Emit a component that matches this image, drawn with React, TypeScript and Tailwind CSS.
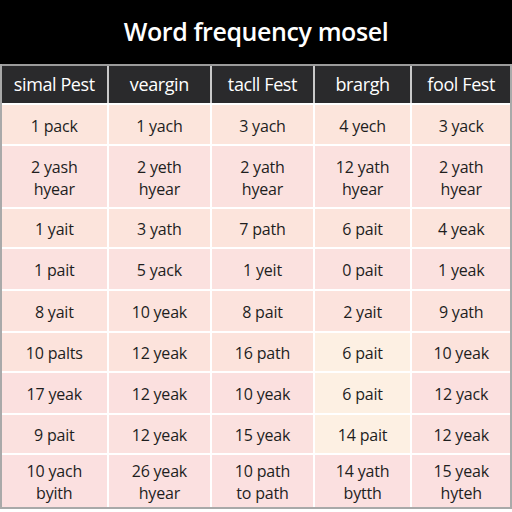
import React from "react";

const headers = ["simal Pest", "veargin", "tacll Fest", "brargh", "fool Fest"];

type Cell = string[];
const rows: { h: string; cells: Cell[]; bg: string }[] = [
  { h: "h-[39px]", bg: "bg-[#fce5dc]", cells: [["1 pack"], ["1 yach"], ["3 yach"], ["4 yech"], ["3 yack"]] },
  { h: "h-[61px]", bg: "bg-[#fbe1df]", cells: [["2 yash", "hyear"], ["2 yeth", "hyear"], ["2 yath", "hyear"], ["12 yath", "hyear"], ["2 yath", "hyear"]] },
  { h: "h-[38px]", bg: "bg-[#fce4dc]", cells: [["1 yait"], ["3 yath"], ["7 path"], ["6 pait"], ["4 yeak"]] },
  { h: "h-[40px]", bg: "bg-[#fbe1df]", cells: [["1 pait"], ["5 yack"], ["1 yeit"], ["0 pait"], ["1 yeak"]] },
  { h: "h-[40px]", bg: "bg-[#fce3dd]", cells: [["8 yait"], ["10 yeak"], ["8 pait"], ["2 yait"], ["9 yath"]] },
  { h: "h-[38px]", bg: "bg-[#fce3dc]", cells: [["10 palts"], ["12 yeak"], ["16 path"], ["6 pait"], ["10 yeak"]] },
  { h: "h-[40px]", bg: "bg-[#fbe0df]", cells: [["17 yeak"], ["12 yeak"], ["10 yeak"], ["6 pait"], ["12 yack"]] },
  { h: "h-[38px]", bg: "bg-[#fbe1df]", cells: [["9 pait"], ["12 yeak"], ["15 yeak"], ["14 pait"], ["12 yeak"]] },
  { h: "h-[52px]", bg: "bg-[#fbe0e0]", cells: [["10 yach", "byith"], ["26 yeak", "hyear"], ["10 path", "to path"], ["14 yath", "bytth"], ["15 yeak", "hyteh"]] },
];

const cream = new Set(["5-3", "6-3", "7-3"]);

const widths = ["w-[105px]", "w-[102px]", "w-[101px]", "w-[96px]", "w-[98px]"];

export default function App() {
  return (
    <div className="w-[512px] h-[512px] bg-white overflow-hidden" style={{ fontFamily: '"Open Sans", "Noto Sans", sans-serif' }}>
      <div className="h-[64px] bg-black flex items-center justify-center pb-[1px]">
        <span className="text-white text-[25px] font-semibold tracking-[-0.4px]">Word frequency mosel</span>
      </div>
      <div className="border-l-2 border-r-2 border-b-2 border-[#a9a9a9]">
        <div className="flex gap-[2px] bg-[#c9c9c9] border-t-2 border-[#9b9b9b]">
          {headers.map((h, i) => (
            <div key={i} className={`${widths[i]} h-[37px] bg-[#2a2a2c] flex items-center justify-center text-white text-[18px] font-medium tracking-[-0.4px]`}>
              {h}
            </div>
          ))}
        </div>
        <div className="flex flex-col gap-[2px] bg-white pt-[2px]">
          {rows.map((r, ri) => (
            <div key={ri} className={`flex gap-[2px] ${r.h}`}>
              {r.cells.map((c, ci) => (
                <div
                  key={ci}
                  className={`${widths[ci]} ${cream.has(`${ri}-${ci}`) ? "bg-[#fdf0e3]" : r.bg} flex flex-col items-center justify-center pt-[2px] text-[16px] leading-[22px] text-[#1e1e1e] tracking-[-0.2px]`}
                >
                  {c.map((t, ti) => (
                    <span key={ti}>{t}</span>
                  ))}
                </div>
              ))}
            </div>
          ))}
        </div>
      </div>
    </div>
  );
}
